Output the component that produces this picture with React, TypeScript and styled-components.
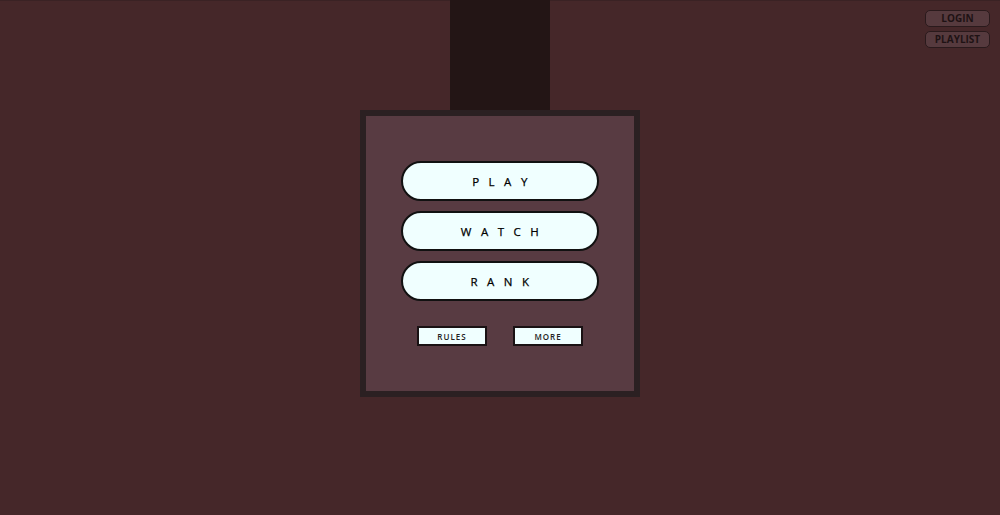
import React from "react";
import styled, { createGlobalStyle } from "styled-components";

const Global = createGlobalStyle`
  html, body { margin: 0; padding: 0; }
  body {
    background: #452729;
    font-family: "Open Sans", "Noto Sans", sans-serif;
    width: 1000px;
    height: 515px;
    overflow: hidden;
  }
`;

const Page = styled.div`
  position: relative;
  width: 1000px;
  height: 515px;
  display: flex;
  flex-direction: column;
  align-items: center;
  box-shadow: inset 0 1px 0 #3a2224;
`;

const Bar = styled.div`
  width: 100px;
  height: 110px;
  background: #231515;
`;

const Panel = styled.div`
  width: 280px;
  height: 287px;
  box-sizing: border-box;
  border: 6px solid #2b2022;
  background: #583b42;
  display: flex;
  flex-direction: column;
  align-items: center;
  padding-top: 45px;
`;

const Pills = styled.div`
  display: flex;
  flex-direction: column;
  gap: 10px;
`;

const Pill = styled.button`
  width: 198px;
  height: 40px;
  box-sizing: border-box;
  border: 2px solid #111;
  border-radius: 20px;
  background: #f0ffff;
  font-family: "Open Sans", "Noto Sans", sans-serif;
  font-size: 11.5px;
  font-weight: 400;
  letter-spacing: 9.5px;
  padding: 0 0 0 9px;
  color: #000;
  -webkit-text-stroke: 0.25px #000;
  cursor: pointer;
`;

const SmallRow = styled.div`
  display: flex;
  gap: 26px;
  margin-top: 25px;
`;

const Small = styled.button`
  width: 70px;
  height: 20px;
  box-sizing: border-box;
  border: 2px solid #1a1214;
  background: #f0ffff;
  font-family: "Open Sans", "Noto Sans", sans-serif;
  font-size: 8px;
  font-weight: 600;
  letter-spacing: 1px;
  color: #222;
  padding: 0;
`;

const Corner = styled.div`
  position: absolute;
  top: 10px;
  right: 10px;
  display: flex;
  flex-direction: column;
  gap: 4px;
`;

const CornerBtn = styled.button`
  width: 65px;
  height: 17px;
  box-sizing: border-box;
  border: 1px solid #2a1a1c;
  border-radius: 5px;
  background: #563a3e;
  color: #1e1214;
  font-family: "Open Sans", "Noto Sans", sans-serif;
  font-size: 10px;
  font-weight: 700;
  padding: 0;
  line-height: 15px;
`;

export default function App() {
  return (
    <>
      <Global />
      <Page>
        <Bar />
        <Panel>
          <Pills>
            <Pill>PLAY</Pill>
            <Pill>WATCH</Pill>
            <Pill>RANK</Pill>
          </Pills>
          <SmallRow>
            <Small>RULES</Small>
            <Small>MORE</Small>
          </SmallRow>
        </Panel>
        <Corner>
          <CornerBtn>LOGIN</CornerBtn>
          <CornerBtn>PLAYLIST</CornerBtn>
        </Corner>
      </Page>
    </>
  );
}
